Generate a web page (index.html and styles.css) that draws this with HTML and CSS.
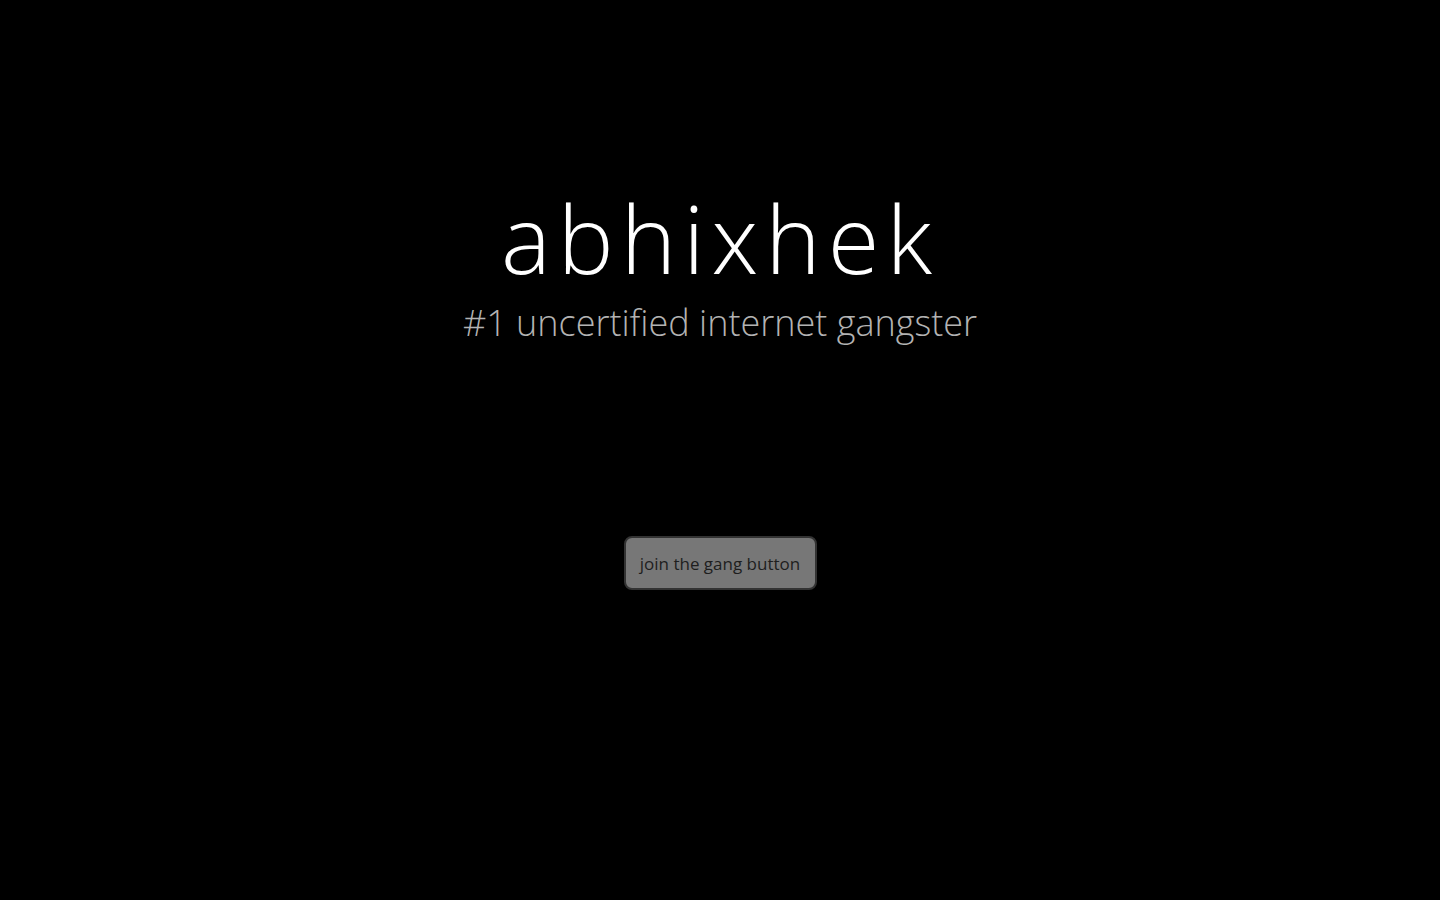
FILE: index.html
```html
<!DOCTYPE html>
<html lang="en">
<head>
<meta charset="utf-8">
<title>abhixhek</title>
<link rel="stylesheet" href="styles.css">
</head>
<body>
<main class="hero">
  <h1 class="title">abhixhek</h1>
  <p class="tagline">#1 uncertified internet gangster</p>
  <button class="join" type="button">join the gang button</button>
</main>
</body>
</html>
```
FILE: styles.css
```css
html, body {
  margin: 0;
  padding: 0;
  background: #000;
  height: 100%;
}
body {
  font-family: "Open Sans", "Liberation Sans", sans-serif;
  color: #fff;
}
.hero {
  display: flex;
  flex-direction: column;
  align-items: center;
  padding-top: 178px;
}
.title {
  margin: 0;
  font-size: 94px;
  font-weight: 300;
  letter-spacing: 7px;
  line-height: 120px;
  color: #fff;
}
.tagline {
  margin: 0;
  font-size: 36px;
  font-weight: 300;
  line-height: 50px;
  color: #b3b3b3;
}
.join {
  margin-top: 188px;
  width: 193px;
  height: 54px;
  background: #777;
  border: 2px solid #333;
  border-radius: 8px;
  font-family: "Open Sans", "Liberation Sans", sans-serif;
  font-size: 17px;
  font-weight: 400;
  color: #1e1e1e;
  padding: 0;
}
```
